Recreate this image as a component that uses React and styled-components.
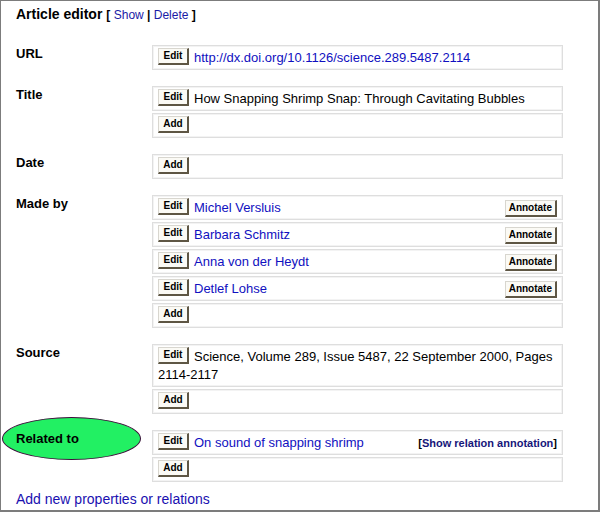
import React from 'react';
import styled, { createGlobalStyle } from 'styled-components';

const GlobalStyle = createGlobalStyle`
  html, body {
    margin: 0;
    padding: 0;
    background: #ffffff;
  }
`;

const Frame = styled.div`
  box-sizing: border-box;
  width: 600px;
  height: 512px;
  border: 1px solid #7c7c7c;
  border-right-width: 2px;
  border-bottom-width: 2px;
  padding: 5px 0 0 15px;
  font-family: 'Liberation Sans', Arial, sans-serif;
  color: #000;
  background: #fff;
`;

const Header = styled.div`
  display: flex;
  align-items: baseline;
  gap: 4px;
  height: 20px;
  margin-bottom: 19px;

  > h1 {
    margin: 0;
    font-size: 14px;
    font-weight: bold;
  }
`;

const Small = styled.span`
  font-size: 12px;
  font-weight: bold;
  color: #000;

  > a {
    color: #1a1aa6;
    font-weight: normal;
    text-decoration: none;
  }
`;

const Row = styled.div`
  display: grid;
  grid-template-columns: 136px 411px;
  margin-bottom: 16px;
`;

const Label = styled.div`
  position: relative;
  font-size: 13px;
  font-weight: bold;
  line-height: 16px;
  padding-top: 1px;
  z-index: 0;

  ${(p) =>
    p.$circled &&
    `
    &::before {
      content: '';
      position: absolute;
      left: -14px;
      top: -13px;
      width: 137px;
      height: 41px;
      border-radius: 50%;
      background: #22f063;
      border: 1.5px solid #3c0d3a;
      z-index: -1;
    }
  `}
`;

const Values = styled.div`
  display: flex;
  flex-direction: column;
  gap: 2px;
`;

const Box = styled.div`
  box-sizing: border-box;
  min-height: 25px;
  border: 1px solid #dedede;
  box-shadow: inset 0 0 0 1px #f3f3f3;
  padding: 3px 5px 2px 5px;
  font-size: 13px;
  line-height: 18px;
  color: ${(p) => (p.$link ? '#1010c0' : '#000')};
`;

const Button = styled.button`
  box-sizing: border-box;
  display: inline-block;
  vertical-align: top;
  height: 17px;
  min-width: ${(p) => (p.$wide ? '52px' : '31px')};
  margin: -1px 5px 0 0;
  padding: 0 3px;
  font-family: 'Liberation Sans', Arial, sans-serif;
  font-size: 10px;
  font-weight: bold;
  line-height: 14px;
  color: #000;
  background: #fbfaf5;
  border: 1px solid #d8d6cf;
  border-right: 2px solid #5e5644;
  border-bottom: 2px solid #5e5644;
  border-radius: 0;
  float: ${(p) => (p.$wide ? 'right' : 'none')};
  ${(p) => p.$wide && 'margin: 1px 0 0 0;'}
`;

const RelNote = styled.span`
  float: right;
  font-size: 11px;
  font-weight: bold;
  color: #000;

  > span {
    color: #16167a;
  }
`;

const AddLink = styled.a`
  display: block;
  margin-top: -7px;
  font-size: 14px;
  color: #1a10b0;
  text-decoration: none;
`;

const Item = ({ text, link, annotate, rel }) => (
  <Box $link={link}>
    {annotate && <Button $wide>Annotate</Button>}
    {rel && (
      <RelNote>
        [<span>Show relation annotation</span>]
      </RelNote>
    )}
    <Button>Edit</Button>
    {text}
  </Box>
);

const AddBox = () => (
  <Box>
    <Button>Add</Button>
  </Box>
);

const authors = ['Michel Versluis', 'Barbara Schmitz', 'Anna von der Heydt', 'Detlef Lohse'];

const App = () => {
  return (
    <Frame>
      <GlobalStyle />
      <Header>
        <h1>Article editor</h1>
        <Small>
          [ <a>Show</a> | <a>Delete</a> ]
        </Small>
      </Header>

      <Row>
        <Label>URL</Label>
        <Values>
          <Item link text="http://dx.doi.org/10.1126/science.289.5487.2114" />
        </Values>
      </Row>

      <Row>
        <Label>Title</Label>
        <Values>
          <Item text="How Snapping Shrimp Snap: Through Cavitating Bubbles" />
          <AddBox />
        </Values>
      </Row>

      <Row>
        <Label>Date</Label>
        <Values>
          <AddBox />
        </Values>
      </Row>

      <Row>
        <Label>Made by</Label>
        <Values>
          {authors.map((a) => (
            <Item key={a} link annotate text={a} />
          ))}
          <AddBox />
        </Values>
      </Row>

      <Row>
        <Label>Source</Label>
        <Values>
          <Item text="Science, Volume 289, Issue 5487, 22 September 2000, Pages 2114-2117" />
          <AddBox />
        </Values>
      </Row>

      <Row>
        <Label $circled>Related to</Label>
        <Values>
          <Item link rel text="On sound of snapping shrimp" />
          <AddBox />
        </Values>
      </Row>

      <AddLink>Add new properties or relations</AddLink>
    </Frame>
  );
};

export default App;
